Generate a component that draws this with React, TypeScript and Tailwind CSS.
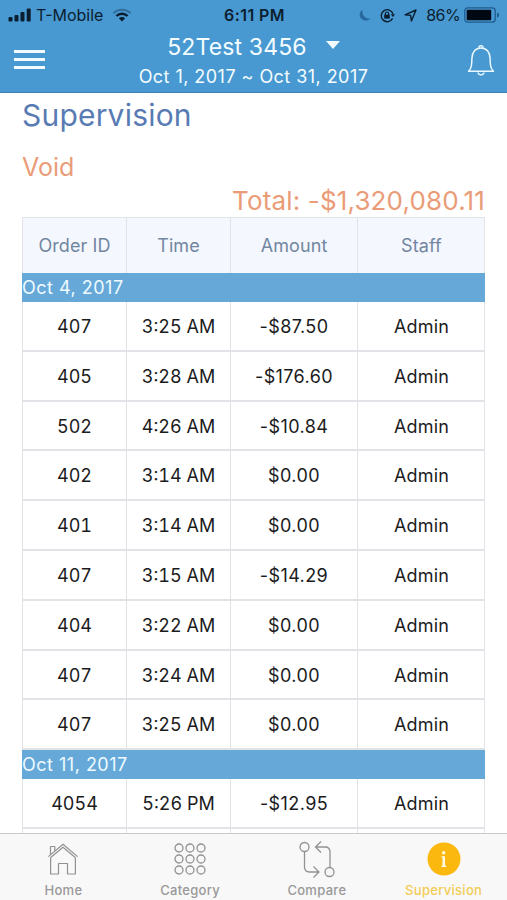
import clsx from "clsx";
import type { ReactNode } from "react";

interface Order {
  id: string;
  time: string;
  amount: string;
  staff: string;
}

interface DayGroup {
  date: string;
  orders: Order[];
}

const columns = ["Order ID", "Time", "Amount", "Staff"];

const groups: DayGroup[] = [
  {
    date: "Oct 4, 2017",
    orders: [
      { id: "407", time: "3:25 AM", amount: "-$87.50", staff: "Admin" },
      { id: "405", time: "3:28 AM", amount: "-$176.60", staff: "Admin" },
      { id: "502", time: "4:26 AM", amount: "-$10.84", staff: "Admin" },
      { id: "402", time: "3:14 AM", amount: "$0.00", staff: "Admin" },
      { id: "401", time: "3:14 AM", amount: "$0.00", staff: "Admin" },
      { id: "407", time: "3:15 AM", amount: "-$14.29", staff: "Admin" },
      { id: "404", time: "3:22 AM", amount: "$0.00", staff: "Admin" },
      { id: "407", time: "3:24 AM", amount: "$0.00", staff: "Admin" },
      { id: "407", time: "3:25 AM", amount: "$0.00", staff: "Admin" },
    ],
  },
  {
    date: "Oct 11, 2017",
    orders: [
      { id: "4054", time: "5:26 PM", amount: "-$12.95", staff: "Admin" },
      { id: "", time: "", amount: "", staff: "" },
    ],
  },
];

function StatusBar() {
  return (
    <div className="grid h-[30px] grid-cols-[1fr_auto_1fr] items-center text-[#0b1e30]">
      <div className="flex items-center pl-2">
        <svg width="24" height="14" viewBox="0 0 24 14" fill="currentColor">
          <rect x="0.5" y="9" width="4" height="4.5" rx="1" />
          <rect x="6.5" y="7" width="4" height="6.5" rx="1" />
          <rect x="12.5" y="4" width="4" height="9.5" rx="1" />
          <rect x="18.7" y="0.5" width="4" height="13" rx="1" />
        </svg>
        <span className="ml-[4px] text-[16px]">T-Mobile</span>
        <svg className="ml-[9px]" width="20" height="14" viewBox="0 0 20 14" fill="none" stroke="currentColor">
          <path d="M1.5 5.2C6.2 0.6 13.8 0.6 18.5 5.2" strokeWidth="2" opacity="0.35" />
          <path d="M4.4 8C7.5 5 12.5 5 15.6 8" strokeWidth="2.4" />
          <path d="M10 13.5L6.8 10.3C8.6 8.7 11.4 8.7 13.2 10.3Z" fill="currentColor" stroke="none" />
        </svg>
      </div>
      <span className="pl-[2px] text-[16px] font-semibold tracking-[0.4px]">6:11 PM</span>
      <div className="flex items-center justify-end pr-[7px]">
        <svg width="12" height="13" viewBox="0 0 12 13" fill="#28699f">
          <path d="M3.6 0.8C0.6 2.4 0 6 1.4 8.6C3.2 12 8.6 13 11.6 9.2C6.4 10.4 2.6 6 3.6 0.8Z" />
        </svg>
        <svg className="ml-[9px]" width="15" height="15" viewBox="0 0 15 15" fill="none" stroke="currentColor" strokeWidth="1.4">
          <path d="M12.6 10.4A6 6 0 1 1 13 6" />
          <path d="M10.8 6.2H15L13 9Z" fill="currentColor" stroke="none" />
          <rect x="4.2" y="6.6" width="5.6" height="4" fill="currentColor" stroke="none" />
          <path d="M5.4 7V5.6A1.6 1.6 0 0 1 8.6 5.6V7" strokeWidth="1.1" />
        </svg>
        <svg className="ml-[9px]" width="13" height="13" viewBox="0 0 13 13" fill="none" stroke="currentColor" strokeWidth="1.4" strokeLinejoin="round">
          <path d="M12 1L7.4 12L6.6 6.4L1 5.8Z" />
        </svg>
        <span className="ml-[9px] text-[16px] tracking-[-0.6px]">86%</span>
        <svg className="ml-[4px]" width="36" height="16" viewBox="0 0 36 16">
          <rect x="0.8" y="0.8" width="30.4" height="14.4" rx="3" fill="none" stroke="#1f5c8e" strokeWidth="1.3" />
          <rect x="2.7" y="2.8" width="24.5" height="10.4" rx="1" fill="#000814" />
          <path d="M33 5.4C35.8 6.4 35.8 9.6 33 10.6Z" fill="#1f5c8e" />
        </svg>
      </div>
    </div>
  );
}

function Header() {
  return (
    <header className="h-[93px] shrink-0 border-b border-[#3c80b5] bg-[#4899d1]">
      <StatusBar />
      <div className="grid grid-cols-[80px_1fr_80px] items-center">
        <div className="mb-[3px] ml-[14px] flex w-[31px] flex-col gap-[5px] justify-self-start">
          <div className="h-[3px] bg-[#f1fbff]" />
          <div className="h-[3px] bg-[#f1fbff]" />
          <div className="h-[3px] bg-[#f1fbff]" />
        </div>
        <div className="flex flex-col items-center text-[#f4fcff]">
          <div className="flex h-[33px] items-center gap-[19px] pt-px">
            <span className="text-[23px] tracking-[0.15px]">52Test 3456</span>
            <svg width="14" height="8" viewBox="0 0 14 8" fill="currentColor" className="mb-1">
              <path d="M0 0H14L7 8Z" />
            </svg>
          </div>
          <div className="h-[29px] text-[18px] leading-[27px] tracking-[0.45px]">Oct 1, 2017 ~ Oct 31, 2017</div>
        </div>
        <svg className="ml-[40px]" width="28" height="32" viewBox="0 0 28 32" fill="none" stroke="#e9f8ff" strokeWidth="1.5" strokeLinejoin="round">
          <path d="M12 2.8A2 2 0 0 1 16 2.8" />
          <path d="M1.5 26.3C4.6 23 4.8 20 4.9 13.5C5 7 8.6 2.9 14 2.9C19.4 2.9 23 7 23.1 13.5C23.2 20 23.4 23 26.5 26.3Z" />
          <path d="M11 27.5C11.5 30.7 16.5 30.7 17 27.5" />
        </svg>
      </div>
    </header>
  );
}

function Row({ children, className }: { children: ReactNode; className: string }) {
  return (
    <div className={clsx("grid grid-cols-[104px_104px_127px_127px] divide-x divide-[#e2e3e6] border-x border-[#e2e3e6] text-center", className)}>
      {children}
    </div>
  );
}

function DateBand({ date }: { date: string }) {
  return <div className="h-[29px] bg-[#66a9d9] text-[18px] leading-[29px] tracking-[0.5px] text-[#eefaff]">{date}</div>;
}

function VoidTable() {
  return (
    <div className="w-[463px]">
      <Row className="h-[56px] border-t bg-[#f4f7fe] text-[18px] leading-[55px] tracking-[0.1px] text-[#71869f]">
        {columns.map((name) => (
          <div key={name}>{name}</div>
        ))}
      </Row>
      {groups.map((group) => (
        <div key={group.date}>
          <DateBand date={group.date} />
          {group.orders.map((order, index) => (
            <Row key={index} className="h-[49.8px] border-b-[2.4px] text-[18px] leading-[50px] text-[#1b1b1d]">
              <div className="tabular-nums">{order.id}</div>
              <div className="tabular-nums">{order.time}</div>
              <div className="tracking-[0.4px]">{order.amount}</div>
              <div className="tracking-[0.2px]">{order.staff}</div>
            </Row>
          ))}
        </div>
      ))}
    </div>
  );
}

function HomeIcon() {
  return (
    <svg width="32" height="32" viewBox="0 0 32 32" fill="none" stroke="#929292" strokeWidth="1.2" strokeLinejoin="round">
      <path d="M1.4 13.6L16 1.3L30.6 13.6" />
      <path d="M3.4 14.7L16 4.2L28.6 14.7" />
      <path d="M3.5 11.5V3.5H7.8V8" />
      <path d="M3.6 15V31H11.5V20.5H20.5V31H28.4V15" />
    </svg>
  );
}

function CategoryIcon() {
  return (
    <svg width="32" height="32" viewBox="0 0 32 32" fill="none" stroke="#929292" strokeWidth="1.3">
      {[5, 16, 27].map((y) => [5, 16, 27].map((x) => <circle key={`${x}-${y}`} cx={x} cy={y} r="4" />))}
    </svg>
  );
}

function CompareIcon() {
  return (
    <svg width="36" height="37" viewBox="0 0 36 37" fill="none" stroke="#929292" strokeWidth="1.3">
      <circle cx="5.5" cy="6" r="4.5" />
      <circle cx="30.5" cy="31" r="4.5" />
      <path d="M5.5 10.5V26Q5.5 31 10.5 31H20M14.5 25.5L20 31L14.5 36.5" />
      <path d="M31 26.5V11Q31 6 26 6H16.5M22 0.5L16.5 6L22 11.5" />
    </svg>
  );
}

function InfoIcon() {
  return (
    <svg width="34" height="34" viewBox="0 0 34 34">
      <circle cx="17" cy="17" r="16.5" fill="#fbb90f" />
      <circle cx="16.7" cy="10.7" r="1.7" fill="#fffbe8" />
      <path d="M14.5 14.2H18V23.6H19.2V25H14.5V23.6H15.5V15.6H14.5Z" fill="#fffbe8" />
    </svg>
  );
}

const tabs = [
  { label: "Home", icon: <HomeIcon /> },
  { label: "Category", icon: <CategoryIcon /> },
  { label: "Compare", icon: <CompareIcon /> },
  { label: "Supervision", icon: <InfoIcon />, active: true },
];

function TabBar() {
  return (
    <nav className="grid h-[67px] shrink-0 grid-cols-4 border-t border-[#c9c9c9] bg-[#f8f8f8]">
      {tabs.map((tab) => (
        <div key={tab.label} className="flex flex-col items-center">
          <div className="flex h-[37px] items-center pt-[13px]">{tab.icon}</div>
          <span
            className={clsx(
              "mt-[10px] text-[13px] leading-[18px] font-medium tracking-[0.3px]",
              tab.active ? "text-[#f2cc55]" : "text-[#989898]"
            )}
          >
            {tab.label}
          </span>
        </div>
      ))}
    </nav>
  );
}

export default function App() {
  return (
    <div className="flex h-[900px] w-[507px] flex-col overflow-hidden bg-white font-['Inter',sans-serif]">
      <Header />
      <main className="min-h-0 flex-1 overflow-hidden pl-[22px]">
        <h1 className="h-[58px] text-[30px] leading-[44px] tracking-[0.2px] text-[#597bb3]">Supervision</h1>
        <h2 className="h-[33px] text-[25px] leading-[33px] text-[#ea9c78]">Void</h2>
        <div className="h-[33px] pr-[22px] text-right text-[26px] leading-[34px] tracking-[0.15px] text-[#ea9c78]">
          Total: -$1,320,080.11
        </div>
        <VoidTable />
      </main>
      <TabBar />
    </div>
  );
}
